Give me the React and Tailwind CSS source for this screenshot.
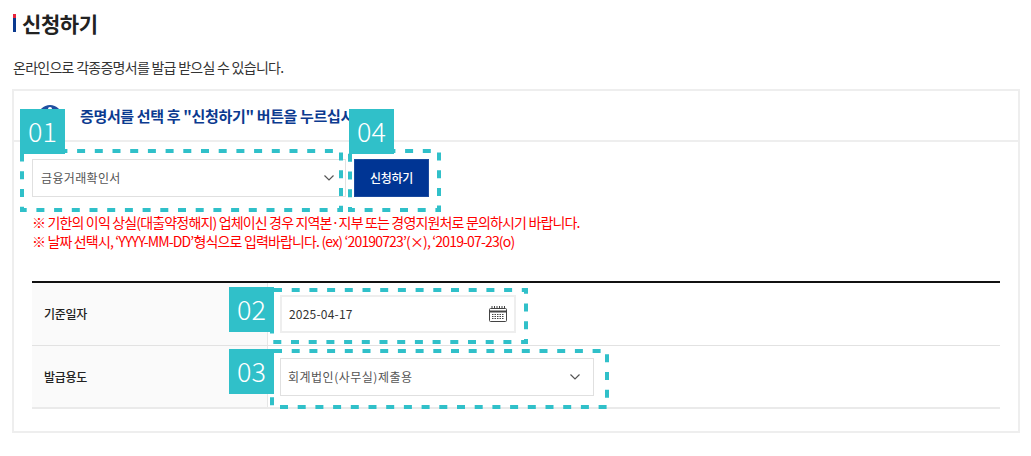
import React from "react";

const font = { fontFamily: '"Noto Sans CJK KR", "Noto Sans", sans-serif' };

function Chevron() {
  return (
    <svg width="10" height="6" viewBox="0 0 10 6" fill="none" stroke="#555" strokeWidth="1.2">
      <path d="M0.5 0.5 L5 5 L9.5 0.5" />
    </svg>
  );
}

function CalendarIcon() {
  return (
    <svg width="18" height="16" viewBox="0 0 18 16" fill="none" stroke="#444" strokeWidth="1">
      <rect x="0.5" y="2.5" width="17" height="13" rx="1" />
      <path d="M0.5 5.5H17.5" strokeWidth="2" />
      <path d="M3 0V3M5.5 0V3M8 0V3M10.5 0V3M13 0V3M15.5 0V3" />
      <path d="M3 8.5H15M3 10.5H15M3 12.5H15" strokeDasharray="1.5 1" />
    </svg>
  );
}

function Badge({ className, children }) {
  return (
    <div className={"absolute flex h-[45px] w-[45px] items-center justify-center bg-[#30c0c9] pb-[2px] text-[27px] leading-none font-light text-white " + className}>
      {children}
    </div>
  );
}

function DashBox({ className, w, h }) {
  return (
    <svg className={"pointer-events-none absolute " + className} width={w} height={h} fill="none">
      <rect x="2" y="2" width={w - 4} height={h - 4} stroke="#30c0c9" strokeWidth="4" strokeDasharray="8 9.7" strokeDashoffset="-2" />
    </svg>
  );
}

function Row({ label, bottom, children }) {
  return (
    <div className={"flex h-[63px] " + (bottom ? "border-b-2 border-[#eaeaea]" : "border-b border-[#e2e2e2]")}>
      <div className="flex w-[236px] items-center border-r border-[#e6e6e6] bg-[#fafafa] pl-[12px] text-[12px] font-medium tracking-[-0.3px] text-[#222]">
        {label}
      </div>
      <div className="flex flex-1 items-center pl-[12px]">{children}</div>
    </div>
  );
}

export default function App() {
  return (
    <div style={font} className="relative h-[456px] w-[1031px] overflow-hidden bg-white pt-[8px] pl-[12px] text-[#222]">
      <div className="flex h-[30px] items-center">
        <div className="ml-px flex h-[18px] w-[3px] flex-col">
          <div className="h-[4px] bg-[#e8243c]" />
          <div className="flex-1 bg-[#0b3a8f]" />
        </div>
        <h1 className="ml-[6px] text-[21px] leading-none font-bold tracking-[-0.4px] text-[#222]">신청하기</h1>
      </div>
      <p className="mt-[19px] ml-px text-[14px] leading-[20px] tracking-[-0.73px] text-[#333]">
        온라인으로 각종증명서를 발급 받으실 수 있습니다.
      </p>

      <div className="mt-[12px] h-[344px] w-[1008px] border-2 border-[#eeeeee] pr-[18px] pl-[18px]">
        <div className="-mx-[18px] flex h-[51px] items-start border-b-2 border-[#eeeeee] pl-[24px]">
          <div className="mt-[14px] flex h-[24px] w-[24px] justify-center rounded-full bg-[#1f4fa0] pt-[2px]">
            <div className="h-[4px] w-[4px] rounded-full bg-white" />
          </div>
          <p className="mt-[15px] ml-[18px] text-[15px] leading-[20px] font-bold tracking-[-0.35px] text-[#0b3a8f]">
            증명서를 선택 후 "신청하기" 버튼을 누르십시오.
          </p>
        </div>

        <div className="mt-[17px] flex items-center">
          <div className="flex h-[38px] w-[314px] items-center justify-between border border-[#e0e0e0] pr-[11px] pl-[8px] text-[12px] tracking-[0.35px] text-[#555]">
            <span>금융거래확인서</span>
            <Chevron />
          </div>
          <button className="ml-[8px] flex h-[38px] w-[75px] items-center justify-center border border-[#1a4a9e] bg-[#003594] text-[12px] font-medium tracking-[-0.3px] text-white">
            신청하기
          </button>
        </div>

        <div className="mt-[16px] text-[14px] leading-[19px] tracking-[-0.84px] text-[#ff0000]">
          <p>※ 기한의 이익 상실(대출약정해지) 업체이신 경우 지역본·지부 또는 경영지원처로 문의하시기 바랍니다.</p>
          <p>※ 날짜 선택시, ‘YYYY-MM-DD’형식으로 입력바랍니다. (ex) ‘20190723’(×), ‘2019-07-23(o)</p>
        </div>

        <div className="mt-[30px] border-t-2 border-[#111]">
          <Row label="기준일자">
            <div className="flex h-[38px] w-[236px] items-center justify-between border-2 border-[#eeeeee] pr-[7px] pl-[7px] text-[12px] tracking-[0.2px] text-[#333]">
              <span>2025-04-17</span>
              <CalendarIcon />
            </div>
          </Row>
          <Row label="발급용도" bottom>
            <div className="flex h-[38px] w-[314px] items-center justify-between border border-[#e0e0e0] pr-[13px] pl-[7px] text-[12px] tracking-[0.5px] text-[#555]">
              <span>회계법인(사무실)제출용</span>
              <Chevron />
            </div>
          </Row>
        </div>
      </div>

      <DashBox className="top-[149px] left-[20px]" w={323} h={63} />
      <DashBox className="top-[149px] left-[348px]" w={93} h={63} />
      <DashBox className="top-[288px] left-[270px]" w={258} h={56} />
      <DashBox className="top-[349px] left-[270px]" w={339} h={60} />
      <Badge className="top-[109px] left-[20px]">01</Badge>
      <Badge className="top-[109px] left-[349px]">04</Badge>
      <Badge className="top-[287px] left-[229px]">02</Badge>
      <Badge className="top-[349px] left-[229px]">03</Badge>
    </div>
  );
}
